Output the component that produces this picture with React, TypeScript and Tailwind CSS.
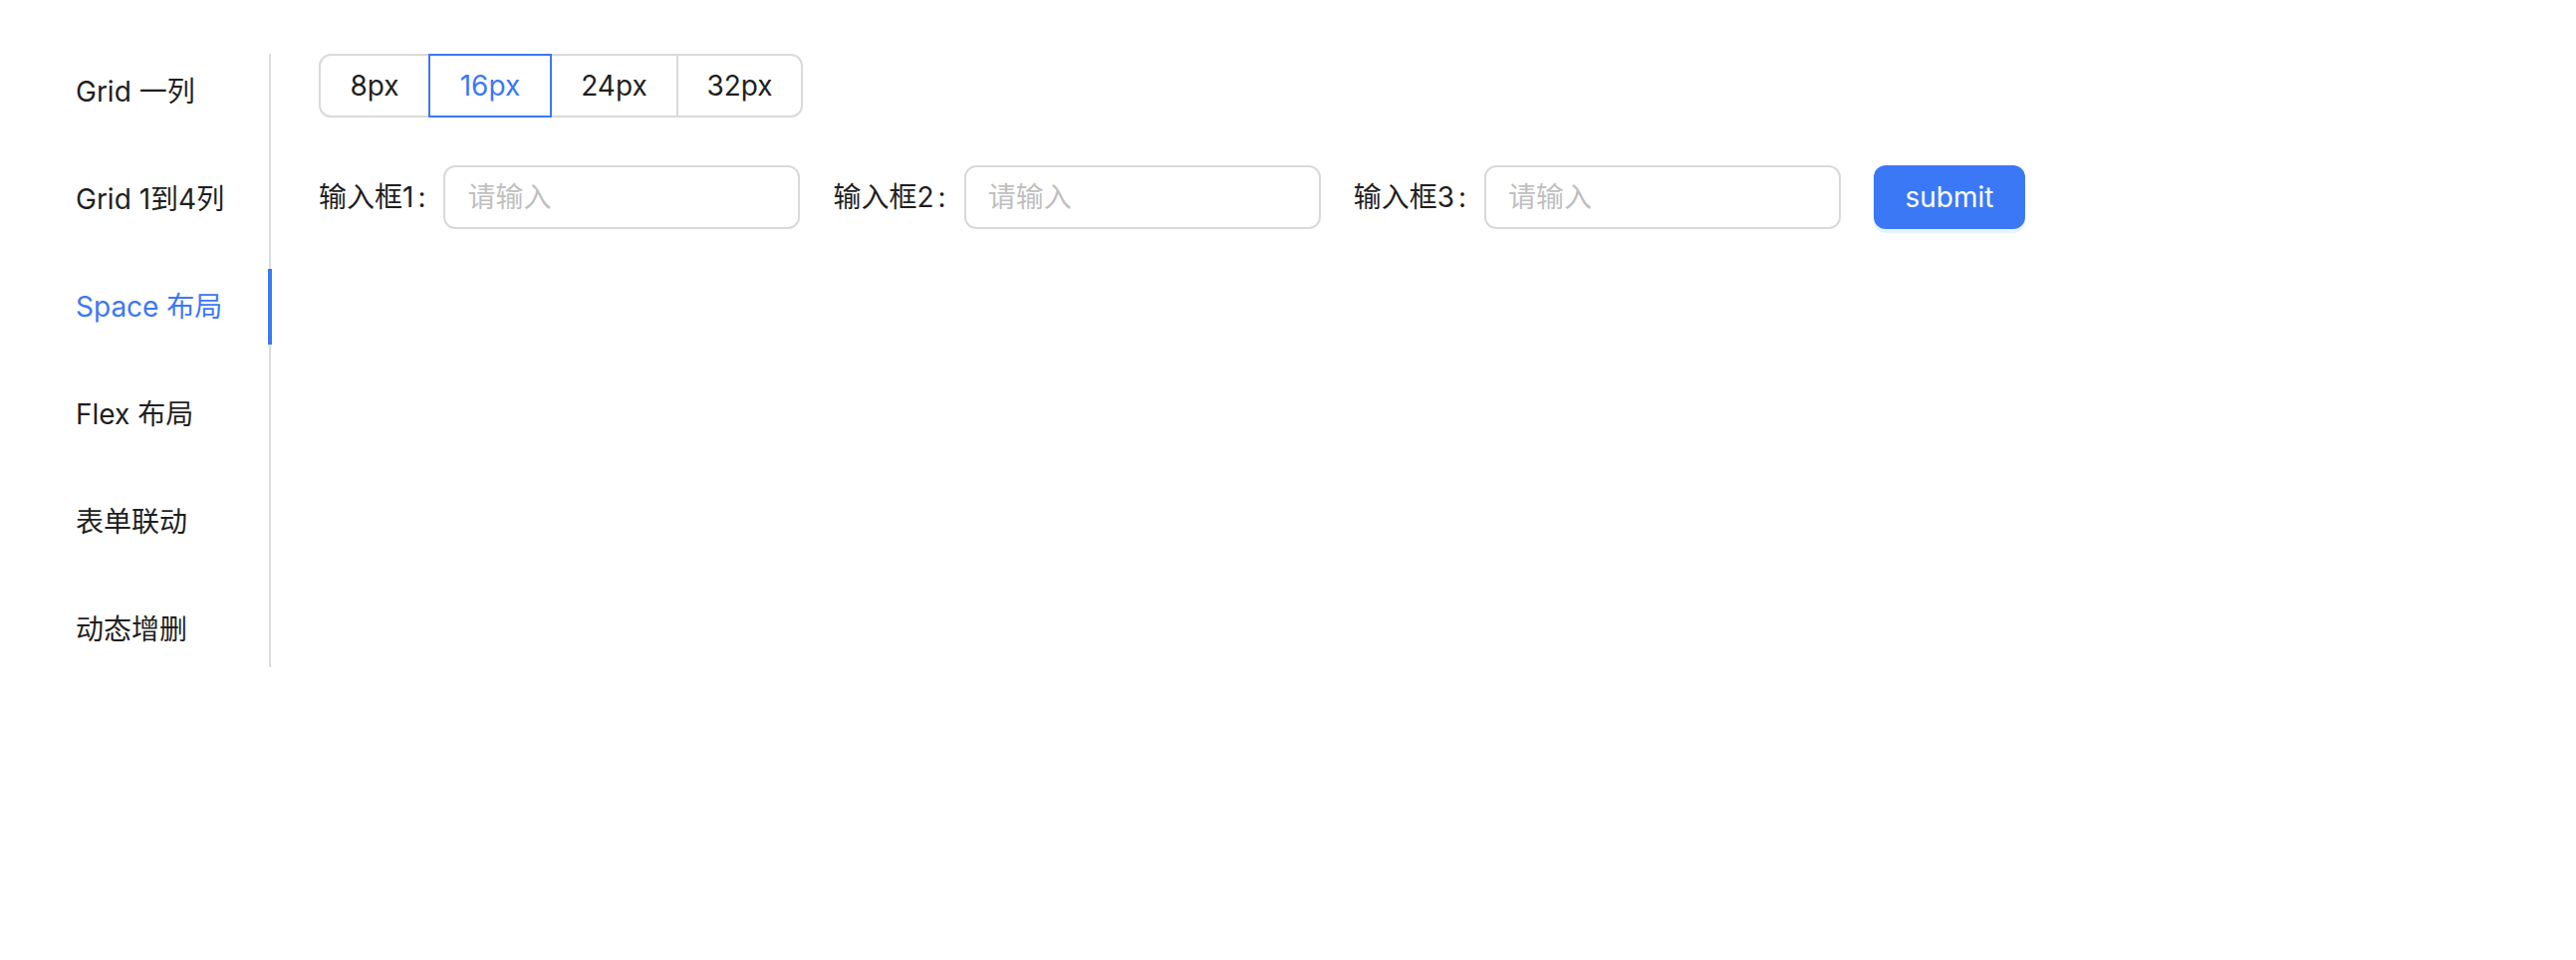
import { useState } from "react";

const menus = ["Grid 一列", "Grid 1到4列", "Space 布局", "Flex 布局", "表单联动", "动态增删"];
const sizes = [
  { label: "8px", w: "w-[112px]" },
  { label: "16px", w: "w-[124px]" },
  { label: "24px", w: "w-[129px]" },
  { label: "32px", w: "w-[127px]" },
];

export default function App() {
  const [active, setActive] = useState(2);
  const [size, setSize] = useState(1);

  return (
    <main
      className="min-h-screen w-full bg-white text-[#1f1f1f] pl-[28px] pt-[54px] flex items-start"
      style={{ fontFamily: 'Inter, "Noto Sans CJK SC", sans-serif' }}
    >
      <nav className="w-[244px] shrink-0 flex flex-col gap-[32px] border-r-2 border-[#dcdcdc]">
        {menus.map((m, i) => (
          <div
            key={m}
            onClick={() => setActive(i)}
            className={
              "relative h-[76px] pl-[48px] flex items-center text-[28px] leading-[44px] cursor-pointer whitespace-nowrap " +
              (i === active ? "text-[#3b78f6]" : "text-[#1f1f1f]")
            }
          >
            {m}
            {i === active && <span className="absolute right-[-3px] top-0 h-full w-[4px] bg-[#3b78f6]" />}
          </div>
        ))}
      </nav>

      <section className="pl-[48px] flex flex-col">
        <div className="flex">
          {sizes.map((s, i) => (
            <button
              key={s.label}
              onClick={() => setSize(i)}
              className={
                "relative h-[64px] border-2 text-[28px] leading-[60px] bg-white text-center " +
                s.w +
                " " +
                (i > 0 ? "-ml-[2px] " : "") +
                (i === 0 ? "rounded-l-[12px] " : "") +
                (i === sizes.length - 1 ? "rounded-r-[12px] " : "") +
                (i === size ? "z-10 border-[#3b78f6] text-[#3b78f6]" : "border-[#d9d9d9] text-[#1f1f1f]")
              }
            >
              {s.label}
            </button>
          ))}
        </div>

        <form className="mt-[48px] flex items-center" onSubmit={(e) => e.preventDefault()}>
          {["输入框1", "输入框2", "输入框3"].map((l) => (
            <div key={l} className="flex items-center mr-[33px]">
              <label className="text-[28px] leading-[44px] whitespace-nowrap">
                {l}
                <span className="ml-[4px] mr-[18px]">:</span>
              </label>
              <input
                placeholder="请输入"
                className="h-[64px] w-[358px] rounded-[12px] border-2 border-[#d9d9d9] px-[22px] text-[28px] outline-none placeholder:text-[#bfbfbf]"
              />
            </div>
          ))}
          <button
            type="submit"
            className="h-[64px] w-[152px] rounded-[12px] bg-[#3b78f6] text-white text-[28px] shadow-[0_4px_0_rgba(5,145,255,0.1)]"
          >
            submit
          </button>
        </form>
      </section>
    </main>
  );
}
